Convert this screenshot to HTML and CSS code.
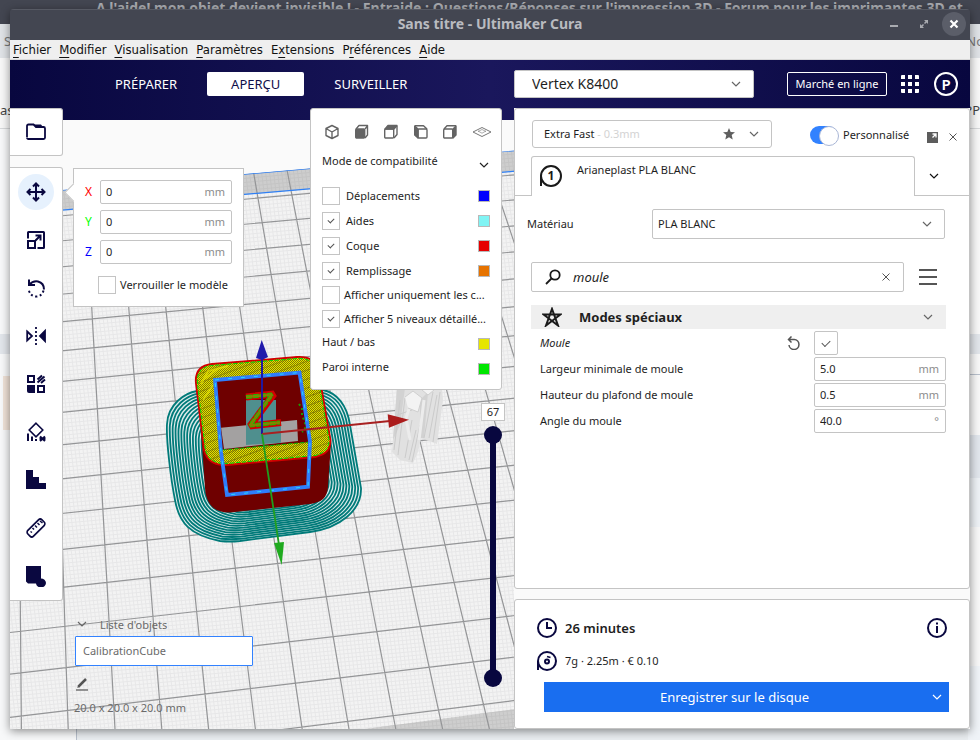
FILE: index.html
```html
<!DOCTYPE html>
<html lang="fr">
<head>
<meta charset="utf-8">
<title>Sans titre - Ultimaker Cura</title>
<link rel="stylesheet" href="styles.css">
</head>
<body>
<svg class="defs" aria-hidden="true">
  <symbol id="chevron" viewBox="0 0 10 6"><path d="M1 1l4 4 4-4" fill="none" stroke="currentColor" stroke-width="1.2"/></symbol>
  <symbol id="cross" viewBox="0 0 8 8"><path d="M.5.5l7 7M7.500.5l-7 7" fill="none" stroke="currentColor" stroke-width="1"/></symbol>
</svg>

<div class="backdrop" aria-hidden="true">
  <div class="backdrop-title">A l'aide! mon objet devient invisible ! - Entraide : Questions/Réponses sur l'impression 3D - Forum pour les imprimantes 3D et</div>
  <div class="backdrop-tabs"><span>S</span><span>No</span></div>
  <div class="backdrop-bar"><span>as</span><span>PP</span></div>
  <div class="backdrop-page">
    <div class="page-left"><div class="stripe"></div><div class="thumb"></div><div class="stripe low"></div></div>
    <div class="page-right"></div>
  </div>
</div>

<div class="window">
  <header class="titlebar">
    <h1>Sans titre - Ultimaker Cura</h1>
    <div class="window-buttons">
      <button aria-label="Réduire"><svg width="10" height="10"><path d="M1 7h8" stroke="#a9abb0" stroke-width="2"/></svg></button>
      <button aria-label="Agrandir"><svg width="10" height="10"><path d="M5 1h4v4zM1 5v4h4z" fill="#a9abb0"/><path d="M2 8l2.500-2.500M8 2L5.500 4.500" stroke="#a9abb0" stroke-width="1.500"/></svg></button>
      <button class="close" aria-label="Fermer"><svg width="10" height="10"><path d="M1.500 1.500l7 7M8.500 1.500l-7 7" stroke="#fff" stroke-width="2.200"/></svg></button>
    </div>
  </header>

  <nav class="menubar">
    <a href="#"><u>F</u>ichier</a><a href="#"><u>M</u>odifier</a><a href="#"><u>V</u>isualisation</a><a href="#"><u>P</u>aramètres</a><a href="#">E<u>x</u>tensions</a><a href="#">P<u>r</u>éférences</a><a href="#"><u>A</u>ide</a>
  </nav>

  <div class="header">
    <nav class="stages">
      <button>PRÉPARER</button><button class="active">APERÇU</button><button>SURVEILLER</button>
    </nav>
    <div class="header-right">
      <div class="select machine">
        <select aria-label="Imprimante"><option>Vertex K8400</option></select>
        <svg class="chev"><use href="#chevron"/></svg>
      </div>
      <div class="account">
        <button class="market">Marché en ligne</button>
        <button class="icon-btn" aria-label="Applications"><svg width="18" height="18" fill="#fff"><path d="M0 1a1 1 0 0 1 1-1h3v4H0zM7 0h4v4H7zM14 0h3a1 1 0 0 1 1 1v3h-4zM0 7h4v4H0zM7 7h4v4H7zM14 7h4v4h-4zM0 14h4v4H1a1 1 0 0 1-1-1zM7 14h4v4H7zM14 14h4v3a1 1 0 0 1-1 1h-3z"/></svg></button>
        <button class="avatar">P</button>
      </div>
    </div>
  </div>

  <main class="stage">
    <svg class="scene" viewBox="10 120 960 609" preserveAspectRatio="xMinYMin slice" role="img" aria-label="Plateau d'impression">
      <defs>
        <pattern id="mesh" width="4" height="4" patternUnits="userSpaceOnUse" patternTransform="matrix(.99 -.09 .12 .99 0 0)"><path d="M0 .5h4M.5 0v4" stroke="#e7e7e8" stroke-width="1"/></pattern>
        <pattern id="meshDark" width="4" height="4" patternUnits="userSpaceOnUse" patternTransform="matrix(.99 -.09 .12 .99 0 0)"><path d="M0 .5h4M.5 0v4" stroke="#c4c4c4" stroke-width="1"/></pattern>
        <pattern id="hatch" width="2" height="2" patternUnits="userSpaceOnUse"><path d="M0 0h1v1H0zM1 1h1v1H1z" fill="#807c00"/></pattern>
        <pattern id="diag" width="13" height="11" patternUnits="userSpaceOnUse" patternTransform="rotate(20)"><path d="M0 11L13 0" stroke="#7d7500" stroke-width="1"/></pattern>
        <clipPath id="plate"><path d="M10 194.600L515 150.500V729H10z"/></clipPath>
        <path id="brim" d="M197 391C185 393 168 404 167 424C166 440 171 480 175 500C179 523 190 535 220 541Q230 542 240 541L310 532C340 528 362 510 361 488L350 425C347 405 337 393 323 390L297 372L212 380Z" vector-effect="non-scaling-stroke"/>
      </defs>
      <rect x="10" y="120" width="960" height="609" fill="#fafafa"/>
      <g clip-path="url(#plate)">
        <path d="M10 194.600L515 150.500V729H10z" fill="#f3f3f3"/>
        <path d="M10 194.600L515 150.500V729H10z" fill="url(#mesh)"/>
        <path d="M10 194.600L515 150.500V171.200L10 214.600z" fill="#cdcdcd"/>
        <path d="M10 194.600L515 150.500V171.200L10 214.600z" fill="url(#meshDark)"/>
        <path d="M365 729L515 709V729z" fill="#cecece"/>
        <path d="M365 729L515 709V729z" fill="url(#meshDark)"/>
        <path fill="none" stroke="#949597" stroke-width="1.200" d="M10 220.500L515 174.800M10 245.500L515 199.800M10 271.500L515 225.800M10 299L515 251.800M10 326.700L515 278.800M10 355.900L515 306.700M10 386.600L515 335.700M10 417.700L515 366.400M10 450.200L515 398.200M10 484.300L515 430.600M10 519L515 465.100M10 555.100L515 500.100M10 593.200L515 537.100M10 632.500L515 575.500M10 674.200L515 615.500M10 717.300L515 657M10 763.600L515 700.400
        M16.100 120L21.400 729M48.700 120L68.200 729M81.400 120L115 729M114 120L161.800 729M146.700 120L208.600 729M179.300 120L255.400 729M212 120L302.200 729M244.600 120L349 729M277.300 120L395.800 729M309.900 120L442.600 729M342.600 120L489.400 729M375.200 120L536.200 729M407.900 120L583 729M440.500 120L629.800 729M473.200 120L676.600 729M505.800 120L723.400 729"/>
        <path d="M10 194.600L515 150.500M10 214.600L515 171.200" stroke="#2f80f5" stroke-width="1.300"/>
      </g>

      <g class="ghost">
        <path d="M397 388L392 452L400 460L413 463L418 452L421 438L437 444L443 400L442 388Z" fill="#e1e1e1"/>
        <path d="M397 388H405L400 425L393 440ZM420 400L428 392L424 438L420 438Z" fill="#d2d2d2"/>
        <path d="M400 400L394 450M405 398L398 455M412 420L405 458M420 425L412 462M433 392L424 438M440 392L433 442M397 415L412 410M416 430L409 460M437 395L429 438" stroke="#cbcbcb"/>
        <path d="M412 400L406 418L410 440M424 400L419 440" stroke="#ececec" stroke-width="3" fill="none"/>
        <path d="M405 397L413 391L422 398L418 412L408 408M422 390L428 395L434 390" fill="#f3f3f3" stroke="#cfcfcf"/>
      </g>

      <use href="#brim" fill="#dcebeb"/>
      <g fill="none" stroke="#007a79" stroke-width="1.800">
        <use href="#brim"/>
        <use href="#brim" transform="translate(7.900 14) scale(.97)"/>
        <use href="#brim" transform="translate(15.800 28) scale(.94)"/>
        <use href="#brim" transform="translate(23.700 42) scale(.91)"/>
        <use href="#brim" transform="translate(31.600 56) scale(.88)"/>
        <use href="#brim" transform="translate(39.500 70) scale(.85)"/>
        <use href="#brim" transform="translate(47.400 84) scale(.82)"/>
        <use href="#brim" transform="translate(55.300 98) scale(.79)"/>
        <use href="#brim" transform="translate(63.200 112) scale(.76)"/>
        <use href="#brim" transform="translate(71.100 126) scale(.73)"/>
        <use href="#brim" transform="translate(79 140) scale(.7)"/>
        <use href="#brim" transform="translate(86.900 154) scale(.67)"/>
        <use href="#brim" transform="translate(94.800 168) scale(.64)"/>
        <use href="#brim" transform="translate(102.700 182) scale(.61)"/>
        <use href="#brim" transform="translate(110.600 196) scale(.58)"/>
      </g>
      <path d="M196 380L200 417L205 488C206 504 214 513 230 512.500L310 504C322 502 327 498 328 487L331 443L322 390L310 365Z" fill="#6f0000"/>
      <path d="M196 384Q194 366 212 364L297 357Q314 356 318 368L330.500 440Q331 454 315 457L227 465Q208 466 204 450Z" fill="#e6e200"/>
      <path d="M196 384Q194 366 212 364L297 357Q314 356 318 368L330.500 440Q331 454 315 457L227 465Q208 466 204 450Z" fill="url(#hatch)"/>
      <path d="M196 384Q194 366 212 364L297 357Q314 356 318 368L330.500 440Q331 454 315 457L227 465Q208 466 204 450Z" fill="url(#diag)" stroke="#d00000" stroke-width="1.800"/>
      <path d="M197.500 384Q196 367 212 365.500L297 358.500Q313 358 316.500 369L329 440Q329 452 315 455.500L227 463.500Q209 464 205.500 450Z" fill="none" stroke="#00d800" stroke-dasharray="4 2"/>
      <path d="M201 384L208 371L228 366M203 400L213 385M203 380L220 367" stroke="#f0ec00" stroke-width="2" fill="none" opacity=".6"/>
      <path d="M215 380L300 372L310 442L222 450Z" fill="#6f0000" stroke="#00b400" stroke-dasharray="4 2"/>
      <path d="M221 427.700L297 420L298 441L224 449Z" fill="#a3a1a1"/>
      <path d="M246 400H276V425H281V442.700L246 445Z" fill="#4f8f8e"/>
      <path d="M299 404l3 4v8l3 6v8l-3 2" stroke="#1d9a00" stroke-width="2" stroke-dasharray="2 3" fill="none"/>
      <g fill="none" stroke-linejoin="bevel">
        <path d="M246 397L274 394L250 426L281 422.500" stroke="#d50000" stroke-width="7"/>
        <path d="M246 397L272 394.500L250 425.500L280 422.500" stroke="#00c800" stroke-width="4" stroke-dasharray="6 1"/>
        <path d="M246 397L272 394.500L250 425.500L280 422.500" stroke="#7f8400" stroke-width="2.500"/>
      </g>
      <path d="M215 380L299.500 372.500L310 441.700L308 486.700L227 495L221 452Z" fill="none" stroke="#2f7dfb" stroke-width="3.800"/>
      <path d="M215 380L299.500 372.500L310 441.700L308 486.700L227 495L221 452Z" fill="none" stroke="#26d9ff" stroke-dasharray="4 9"/>
      <path d="M262 434V356" stroke="#2018a0" stroke-width="2"/><path d="M256 358L261.700 340L268 357L262 360Z" fill="#211bab"/>
      <path d="M262 434L390 421" stroke="#a82020" stroke-width="1.800"/><path d="M387.700 414.300L409 419.700L389 427.700Z" fill="#ab1c1c"/>
      <path d="M262 434L279 545" stroke="#1f9f1f" stroke-width="1.800"/><path d="M274 543L284 542L281.700 565Z" fill="#1faa1f"/>
    </svg>

    <div class="overlay">
      <div class="left-rail">
        <div class="rail-box"><button class="tool" aria-label="Ouvrir un fichier"><svg width="20" height="20"><path d="M1 15V4Q1 2.500 2.500 2.500H7.500L10 5H17.500Q19 5 19 6.500V15.500Q19 17 17.500 17H2.500Q1 17 1 15.500" fill="none" stroke="#0a0840" stroke-width="1.800"/><path d="M7.500 2.500H15L17 5H10z" fill="#0a0840"/></svg></button></div>
        <div class="rail-box tools">
          <button class="tool active" aria-label="Déplacer"><svg width="20" height="20" fill="none" stroke="#0a0840" stroke-width="2"><path d="M10 2v16M2 10h16M7 4.500L10 1.500l3 3M7 15.500l3 3 3-3M4.500 7L1.500 10l3 3M15.500 7l3 3-3 3"/></svg></button>
          <button class="tool" aria-label="Mettre à l'échelle"><svg width="20" height="20" fill="none" stroke="#0a0840" stroke-width="2"><path d="M2 8.500V2.500Q2 2 2.500 2h15q.5 0 .5.5v15q0 .5-.5.5h-6M2 11h7v7H2zM9.500 10.500L14.500 5.500M9.500 5.500h5v5"/></svg></button>
          <button class="tool" aria-label="Pivoter"><svg width="20" height="20" fill="none" stroke="#0a0840" stroke-width="2"><path d="M3 1.500V7h6M3 7Q7 2.500 12 3.500 18 5 18 11.500"/><path d="M17.500 12.500Q16 18 10.500 18.500 4 18.500 2.500 11" stroke-dasharray="2 2.500"/></svg></button>
          <button class="tool" aria-label="Miroir"><svg width="20" height="20" fill="none" stroke="#0a0840" stroke-width="1.800"><path d="M1.200 5.500L6 10l-4.800 4.500z"/><path d="M10 1v18" stroke-dasharray="2 2"/><path d="M19 5l-5 5 5 5z" fill="#0a0840"/></svg></button>
          <button class="tool" aria-label="Réglages par modèle"><svg width="20" height="20" fill="none" stroke="#0a0840" stroke-width="2"><path d="M2 2h6v6H2zM12 12h6v6h-6z"/><path d="M1 11h8v8H3q-2 0-2-2z" fill="#0a0840" stroke="none"/><path d="M11.500 5.500L16 1.500M11.500 8.500L18.500 2.500M15 9l4-3.500"/></svg></button>
          <button class="tool" aria-label="Bloqueur de supports"><svg width="20" height="20" fill="none" stroke="#0a0840" stroke-width="2"><path d="M10 1.200L16.800 8 10 14.800 3.200 8z" stroke-width="1.600"/><path d="M2 11.500V19M6 14.500V19M10 17v2M14 14.500l5 4.500M19 14.500L14 19M13.500 16.700h6"/></svg></button>
          <button class="tool" aria-label="Support personnalisé"><svg width="20" height="20"><path d="M0 0h7v7h6v6h7v6H0z" fill="#0a0840"/></svg></button>
          <button class="tool" aria-label="Mesurer"><svg width="20" height="20" fill="none" stroke="#0a0840" stroke-width="1.700"><rect x="-10" y="-4" width="20" height="8" rx="2.500" transform="translate(10 10) rotate(-45)"/><path d="M9 7.500l2 2M11.500 5l2 2M14 3l2.500 2M6.500 10l1.500 1.500M4.500 13.500l1.500 1" stroke-width="1.500"/></svg></button>
          <button class="tool" aria-label="Marquage"><svg width="20" height="22"><path d="M0 1h15v12.500a5 4.500 0 1 1-5 5H2L0 16.500z" fill="#0a0840"/></svg></button>
        </div>
      </div>

      <div class="center-left">
        <form class="popover">
          <label class="axis"><span class="x">X</span><span class="field"><input value="0"><i>mm</i></span></label>
          <label class="axis"><span class="y">Y</span><span class="field"><input value="0"><i>mm</i></span></label>
          <label class="axis"><span class="z">Z</span><span class="field"><input value="0"><i>mm</i></span></label>
          <label class="lock"><input type="checkbox" class="check">Verrouiller le modèle</label>
        </form>
        <section class="objects">
          <button class="objects-head"><svg class="chev"><use href="#chevron"/></svg>Liste d'objets</button>
          <button class="object">CalibrationCube</button>
          <button class="edit" aria-label="Renommer"><svg width="14" height="14"><path d="M3.500 9.500L11 2" stroke="#555" stroke-width="2.500"/><path d="M3 8l-.7 3L5 10z" fill="#555"/><path d="M1 13h12" stroke="#555" stroke-width="1.200"/></svg></button>
          <p>20.0 x 20.0 x 20.0 mm</p>
        </section>
      </div>

      <div class="center-right">
        <section class="preview">
          <div class="views">
            <button aria-label="Vue 3D"><svg width="16" height="16" class="cube"><path d="M8 1.500l6 3v7l-6 3-6-3v-7zM2 4.500l6 3.500 6-3.500M8 8v6.500"/></svg></button>
            <button aria-label="Vue de face"><svg width="16" height="16" class="cube"><path d="M2 5l3-3.500h8.500V11L11 14M11 5l2.500-3"/><rect x="1.700" y="5" width="9" height="9" rx="1" fill="#646464"/></svg></button>
            <button aria-label="Vue de dessus"><svg width="16" height="16" class="cube"><path d="M2 5l3-3.500h9L11 5z" fill="#646464"/><path d="M14 2v8.500L11 14"/><rect x="1.700" y="5" width="9" height="9" rx="1"/></svg></button>
            <button aria-label="Vue gauche"><svg width="16" height="16" class="cube"><path d="M1.700 2L5 5v9L1.700 11z" fill="#646464"/><path d="M2 1.700h8.500L14 5"/><rect x="5" y="5" width="9" height="9" rx="1"/></svg></button>
            <button aria-label="Vue droite"><svg width="16" height="16" class="cube"><path d="M11 5l3-3v9l-3 3z" fill="#646464"/><path d="M2 5l3-3.300h9"/><rect x="1.700" y="5" width="9" height="9" rx="1"/></svg></button>
            <button aria-label="Rayons X"><svg width="20" height="16" class="thin"><path d="M1 8l9-4.500L19 8l-9 4.500z"/><path d="M6 7l4 2.200M10 5.500l4 2M14 7l-4 2.200M10 5.500L6 7.500" opacity=".6"/></svg></button>
          </div>
          <button class="mode">Mode de compatibilité<svg class="chev"><use href="#chevron"/></svg></button>
          <ul class="layers">
            <li><label><input type="checkbox" class="check">Déplacements</label><span class="swatch blue"></span></li>
            <li><label><input type="checkbox" class="check" checked>Aides</label><span class="swatch cyan"></span></li>
            <li><label><input type="checkbox" class="check" checked>Coque</label><span class="swatch red"></span></li>
            <li><label><input type="checkbox" class="check" checked>Remplissage</label><span class="swatch orange"></span></li>
            <li class="plain"><label><input type="checkbox" class="check">Afficher uniquement les c...</label></li>
            <li class="plain"><label><input type="checkbox" class="check" checked>Afficher 5 niveaux détaillé...</label></li>
            <li class="legend">Haut / bas<span class="swatch yellow"></span></li>
            <li class="legend">Paroi interne<span class="swatch green"></span></li>
          </ul>
        </section>
        <div class="layer-slider">
          <output>67</output>
          <div class="ranges">
            <input type="range" min="0" max="67" value="67" aria-label="Couche supérieure">
            <input type="range" min="0" max="67" value="0" aria-label="Couche inférieure">
          </div>
        </div>
      </div>

      <aside class="right-col">
        <section class="settings">
          <div class="quality-row">
            <button class="quality"><span>Extra Fast <em>- 0.3mm</em></span><svg width="12" height="12"><path d="M6 0l1.700 4 4.300.3-3.300 2.800 1 4.300L6 9.200l-3.700 2.200 1-4.300L0 4.300 4.300 4z" fill="#5f5f5f"/></svg><svg class="chev"><use href="#chevron"/></svg></button>
            <label class="toggle"><input type="checkbox" checked>Personnalisé</label>
            <div class="panel-icons">
              <button aria-label="Détacher"><svg width="11" height="11"><path d="M0 0h11v11H0z" fill="#5c5c5c"/><path d="M5.500 2H9v3.500M9 2L5.500 5.500" stroke="#fff" stroke-width="1.300" fill="none"/></svg></button>
              <button aria-label="Fermer"><svg width="8" height="8"><use href="#cross"/></svg></button>
            </div>
          </div>
          <div class="extruder-row">
            <button class="extruder"><svg width="24" height="24"><path d="M2 22V12" stroke="#1a1a1a" stroke-width="2"/><circle cx="12" cy="12" r="10" fill="none" stroke="#1a1a1a" stroke-width="2"/><text x="12" y="16" text-anchor="middle">1</text></svg><span>Arianeplast PLA BLANC</span></button>
            <button class="extruder-more" aria-label="Configuration"><svg class="chev"><use href="#chevron"/></svg></button>
          </div>
          <div class="material-row">
            <label for="material">Matériau</label>
            <div class="select"><select id="material"><option>PLA BLANC</option></select><svg class="chev"><use href="#chevron"/></svg></div>
          </div>
          <div class="search-row">
            <label class="search"><svg width="16" height="16"><circle cx="10" cy="6" r="4.700" fill="none" stroke="#1a1a1a" stroke-width="1.800"/><path d="M6.500 9.500L1 15" stroke="#1a1a1a" stroke-width="1.800"/></svg><input value="moule" aria-label="Rechercher"><button type="button" aria-label="Effacer"><svg width="8" height="8"><use href="#cross"/></svg></button></label>
            <button class="burger" aria-label="Menu"><svg width="18" height="17"><path d="M0 1h18M0 8h18M0 15h18" stroke="#555" stroke-width="2"/></svg></button>
          </div>
          <div class="params">
            <button class="category"><svg width="20" height="20" viewBox="0 0 20 20"><path d="M4 18.500L10 2l6 16.500L1.500 7.500h17z" fill="none" stroke="#1a1a1a" stroke-width="2"/></svg>Modes spéciaux<svg class="chev"><use href="#chevron"/></svg></button>
            <div class="param changed"><label for="p1">Moule</label><button aria-label="Réinitialiser"><svg width="14" height="14" fill="none" stroke="#555" stroke-width="1.500"><path d="M2 3.500H7.200A5 5 0 1 1 2 9M4.500.5L1.500 3.500l3 3"/></svg></button><div class="value"><input id="p1" type="checkbox" class="check big" checked></div></div>
            <div class="param"><label for="p2">Largeur minimale de moule</label><span class="field value"><input id="p2" value="5.0"><i>mm</i></span></div>
            <div class="param"><label for="p3">Hauteur du plafond de moule</label><span class="field value"><input id="p3" value="0.5"><i>mm</i></span></div>
            <div class="param"><label for="p4">Angle du moule</label><span class="field value"><input id="p4" value="40.0"><i>°</i></span></div>
          </div>
        </section>

        <section class="action">
          <div class="line time"><svg width="20" height="20" fill="none" stroke="#0a0840" stroke-width="2"><circle cx="10" cy="10" r="9"/><path d="M10 4v6h5"/></svg><strong>26 minutes</strong>
            <button aria-label="Informations"><svg width="20" height="20" fill="none" stroke="#0a0840" stroke-width="2"><circle cx="10" cy="10" r="9"/><path d="M10 8v7M10 4.500v2"/></svg></button></div>
          <div class="line"><svg width="20" height="20" fill="none" stroke="#0a0840" stroke-width="2"><circle cx="10" cy="10" r="9"/><path d="M1 10v9"/><circle cx="10" cy="10.500" r="2"/><path d="M10 5.500L13.500 6.500" stroke-width="1.800"/></svg><span>7g · 2.25m · € 0.10</span></div>
          <div class="save"><button>Enregistrer sur le disque</button><button class="more" aria-label="Autres destinations"><svg class="chev"><use href="#chevron"/></svg></button></div>
        </section>
      </aside>
    </div>
  </main>
</div>
</body>
</html>
```
FILE: styles.css
```css
* { box-sizing: border-box; }
body {
  margin: 0;
  height: 100vh;
  padding: 9px 10px 11px;
  overflow: hidden;
  font: 11px/16px "Noto Sans", sans-serif;
  color: #1e1e1e;
}
button, input, select { font: inherit; color: inherit; margin: 0; padding: 0; border: 0; background: none; outline: 0; }
svg { display: block; flex: none; }
em, i { font-style: normal; }
.defs { position: absolute; width: 0; height: 0; }
.chev { width: 10px; height: 6px; color: #666; }

/* browser window lying behind */
.backdrop { position: absolute; inset: 0; z-index: -1; display: flex; flex-direction: column; overflow: hidden; background: #f7f8f9; }
.backdrop-title { flex: none; height: 24px; padding-left: 96px; background: #434651; color: #a9abb0; font: bold 14px/16px "Noto Sans", sans-serif; white-space: nowrap; }
.backdrop-tabs, .backdrop-bar { flex: none; display: flex; justify-content: space-between; height: 34px; line-height: 34px; padding: 0 1px 0 4px; background: #dfe2e6; color: #777; font-size: 13px; }
.backdrop-tabs span:last-child { margin-right: -5px; }
.backdrop-bar { height: 71px; line-height: 104px; padding-left: 0; background: #f7f7f7; border-bottom: 1px solid #d6d8da; color: #444; }
.backdrop-bar span:last-child { margin-right: -1px; }
.backdrop-page { flex: 1; display: flex; min-height: 0; }
.page-left { flex: 1; }
.page-right { width: 12px; background: linear-gradient(#f7f7f7 205px, #e1e5ea 205px 225px, #f7f7f7 225px 245px, #b8c0cc 245px 246px, #f7f7f7 246px 306px, #e1e6ec 306px 349px, #edf1f5 349px 398px, #f7f7f7 398px 537px, #eff3f7 537px); }
.stripe { height: 20px; margin-top: 205px; background: #e1e5ea; }
.thumb { width: 30px; height: 54px; margin: 22px 0 0 3px; background: #f0e2d7; }
.stripe.low { margin: 236px 0 0 76px; height: 80px; border-left: 1px solid #b8c0cc; background: #e9edf0; }

.window { display: flex; flex-direction: column; height: 100%; border-radius: 4px 4px 0 0; overflow: hidden; box-shadow: 0 2px 10px rgba(0, 0, 0, .45); }
.titlebar { display: grid; grid-template-columns: 1fr; height: 31px; align-items: center; padding-bottom: 2px; background: #434651; border-top: 1px solid #575a64; }
.titlebar h1 { grid-area: 1/1; margin: 0; text-align: center; font-size: 14px; line-height: 18px; color: #b9bbc0; }
.window-buttons { grid-area: 1/1; justify-self: end; display: flex; gap: 6px; padding-right: 4px; }
.window-buttons button { display: grid; place-items: center; width: 24px; height: 24px; border-radius: 50%; }
.window-buttons .close { background: #5b5e69; }

.menubar { display: flex; gap: 8px; height: 20px; padding-left: 3px; background: #efefef; border-bottom: 1px solid #d8d8d8; font: 13px/19px "DejaVu Sans Condensed", "DejaVu Sans", sans-serif; }
.menubar a { color: #111; text-decoration: none; }
.menubar u { text-underline-offset: 3px; }

.header { display: flex; flex: none; justify-content: space-between; height: 60px; padding-top: 10px; background: linear-gradient(90deg, #08073f, #1a175c 50%, #08073f); }
.stages { display: flex; gap: 6px; padding: 2px 0 0 81px; }
.stages button { height: 24px; padding: 0 24px; border-radius: 2px; font-size: 13px; color: #fff; }
.stages .active { background: #fff; color: #0f0e4a; }
.header-right { display: flex; justify-content: space-between; width: 456px; }
.account { display: flex; align-items: center; height: 28px; margin-right: 12px; }
.market { height: 24px; width: 100px; border: 1px solid #fff; border-radius: 2px; color: #fff; }
.icon-btn { margin: 0 15px 0 14px; }
.avatar { width: 24px; height: 24px; border: 2px solid #fff; border-radius: 50%; color: #fff; font-size: 15px; line-height: 18px; font-weight: 600; }

.select { display: grid; align-items: center; border: 1px solid #c4c4c4; border-radius: 2px; background: #fff; }
.select select { grid-area: 1/1; appearance: none; width: 100%; height: 28px; padding: 0 5px; }
.select .chev { grid-area: 1/1; justify-self: end; margin-right: 12px; pointer-events: none; }
.machine { width: 240px; height: 28px; }
.machine select { height: 26px; padding: 0 17px; font-size: 14px; }

.stage { position: relative; flex: 1; min-height: 0; }
.scene { position: absolute; inset: 0; width: 100%; height: 100%; }
.overlay { position: relative; display: flex; height: calc(100% + 12px); margin-top: -12px; }

.left-rail { display: flex; flex-direction: column; align-items: flex-start; gap: 11px; }
.rail-box { width: 53px; padding: 5px 8px; background: #fff; border: 1px solid #c4c4c4; border-left: 0; border-radius: 0 3px 3px 0; }
.tools { display: flex; flex-direction: column; gap: 12px; padding: 6px 8px; }
.tool { display: grid; place-items: center; width: 36px; height: 36px; border-radius: 50%; }
.tool.active { background: #e6f1fd; }

.center-left { display: flex; flex: 1; flex-direction: column; justify-content: space-between; align-items: flex-start; padding: 60px 0 13px 10px; }
.popover { position: relative; display: flex; flex-direction: column; gap: 6px; width: 171px; height: 139px; padding: 11px; background: #fff; border: 1px solid #c4c4c4; }
.popover::before { content: ""; position: absolute; left: -7px; top: 17px; width: 12px; height: 12px; background: #fff; border: 1px solid #c4c4c4; border-width: 0 0 1px 1px; transform: rotate(45deg); }
.axis { display: flex; align-items: center; justify-content: space-between; font-size: 12px; }
.axis .x { color: #f00; } .axis .y { color: #0f0; } .axis .z { color: #00f; }
.field { display: flex; align-items: center; width: 132px; height: 24px; padding: 0 6px 0 5px; border: 1px solid #c4c4c4; border-radius: 2px; background: #fff; font-size: 11px; }
.field input { flex: 1; min-width: 0; }
.field i { color: #8c8c8c; }
.lock { display: flex; align-items: center; gap: 4px; margin: 6px 0 0 13px; white-space: nowrap; }
.check { appearance: none; flex: none; display: grid; place-items: center; width: 18px; height: 18px; border: 1px solid #c4c4c4; background: #fff; }
.check:checked::before { content: ""; width: 5px; height: 3px; margin-top: -2px; border: solid #555; border-width: 0 0 1px 1px; transform: rotate(-45deg); }
.check.big { width: 24px; height: 24px; border-radius: 2px; }
.check.big:checked::before { width: 7px; height: 4px; }

.objects { display: flex; flex-direction: column; align-items: flex-start; color: #6a6a6a; }
.objects-head { display: flex; gap: 13px; margin-left: 4px; height: 19px; line-height: 16px; }
.objects-head .chev { margin-top: 4px; }
.object { width: 178px; height: 30px; margin-left: 2px; padding: 0 7px; text-align: left; background: #fff; border: 1px solid #3282ff; border-radius: 1px; }
.edit { margin: 11px 0 9px 2px; }
.objects p { margin: 0 0 0 1px; }

.center-right { display: flex; flex-direction: column; align-items: flex-end; width: 204px; padding-right: 12px; }
.preview { width: 192px; height: 282px; padding: 15px 11px 0; background: #fff; border: 1px solid #c4c4c4; border-radius: 3px; }
.views { display: flex; justify-content: space-between; margin: 0 -2px 0 2px; }
.cube { fill: none; stroke: #646464; stroke-width: 1.4; stroke-linejoin: round; }
.thin { fill: none; stroke: #777; stroke-width: 1; }
.mode { display: flex; align-items: center; justify-content: space-between; width: 100%; margin: 13px 0 14px; padding-right: 1px; }
.mode .chev { margin-top: 8px; color: #222; }
.layers { margin: 0; padding: 0; list-style: none; }
.layers li { display: flex; align-items: center; justify-content: space-between; height: 25px; }
.layers label { display: flex; align-items: center; gap: 6px; white-space: nowrap; }
.layers .plain { height: 24px; }
.layers .plain label { gap: 4px; }
.layers .legend { line-height: 12px; align-items: flex-start; padding-top: 5px; }
.legend .swatch { margin-top: 2px; }
.swatch { width: 12px; height: 12px; border: 1px solid #b9b9b9; }
.blue { background: #00f; } .cyan { background: #80f4f4; } .red { background: #e60000; }
.orange { background: #e67300; } .yellow { background: #e6e600; } .green { background: #00e600; }

.layer-slider { display: flex; flex-direction: column; align-items: center; gap: 5px; width: 24px; margin: 13px -3px 0 0; }
.layer-slider output { width: 24px; height: 18px; background: #fff; border: 1px solid #c4c4c4; text-align: center; line-height: 16px; }
.ranges { display: grid; justify-items: center; height: 261px; width: 18px; background: linear-gradient(#08073f, #08073f) center / 6px 240px no-repeat; }
.ranges input { grid-area: 1/1; appearance: none; writing-mode: vertical-lr; direction: rtl; width: 18px; height: 261px; pointer-events: none; }
.ranges input::-webkit-slider-thumb { appearance: none; width: 18px; height: 18px; border-radius: 50%; background: #08073f; pointer-events: auto; }

.right-col { display: flex; flex-direction: column; gap: 10px; width: 456px; background: #fafafa; }
.settings, .action { background: #fff; border: 1px solid #c4c4c4; border-radius: 3px; }
.settings { flex: 1; padding-top: 11px; }
.quality-row { display: flex; align-items: center; padding: 0 12px 0 17px; }
.quality { display: flex; align-items: center; width: 240px; height: 28px; padding: 0 12px 0 11px; border: 1px solid #c4c4c4; border-radius: 3px; }
.quality span { flex: 1; text-align: left; }
.quality em { color: #d3d3d3; }
.quality .chev { margin-left: 14px; }
.toggle { display: flex; align-items: center; gap: 6px; margin: 2px 0 0 38px; }
.toggle input { appearance: none; width: 27px; height: 18px; border-radius: 9px; background: #3282ff; }
.toggle input::before { content: ""; display: block; width: 18px; height: 18px; margin-left: 9px; border: 1px solid #a9b6d6; border-radius: 50%; background: #fff; }
.panel-icons { display: flex; align-items: center; gap: 11px; margin: 6px 0 0 auto; color: #555; }
.extruder-row { display: flex; height: 40px; margin-top: 8px; }
.extruder-row::before { content: ""; width: 16px; border-bottom: 1px solid #c4c4c4; }
.extruder { display: flex; gap: 14px; width: 384px; padding: 7px 7px 0; align-items: flex-start; border: 1px solid #c4c4c4; border-bottom: 0; border-radius: 3px 3px 0 0; }
.extruder span { margin-top: -2px; }
.extruder text { font: bold 12px "Noto Sans", sans-serif; fill: #1a1a1a; }
.extruder-more { flex: 1; display: grid; place-items: center; padding-right: 16px; border-bottom: 1px solid #c4c4c4; }
.extruder-more .chev { color: #111; }
.material-row { display: flex; align-items: center; justify-content: space-between; padding: 13px 24px 0 12px; }
.material-row .select { width: 293px; height: 30px; }
.search-row { display: flex; align-items: center; gap: 15px; padding: 23px 24px 0 16px; }
.search { display: flex; align-items: center; width: 373px; height: 30px; padding: 0 13px; border: 1px solid #c4c4c4; border-radius: 2px; color: #555; }
.search input { flex: 1; min-width: 0; margin-left: 12px; font-size: 13px; font-style: italic; color: #1e1e1e; }
.params { padding: 13px 23px 0 16px; }
.category { display: flex; align-items: center; width: 100%; height: 24px; margin-bottom: 2px; padding: 0 13px 0 11px; background: #efefef; font-size: 13px; font-weight: bold; }
.category svg:first-child { margin-right: 17px; }
.category .chev { margin-left: auto; }
.param { display: flex; align-items: center; height: 24px; margin-bottom: 2px; padding-left: 9px; }
.param label { flex: 1; }
.changed label { font-style: italic; }
.changed button { margin-right: 13px; }
.value { width: 132px; }

.action { height: 130px; padding: 18px 20px 0 22px; }
.line { display: flex; align-items: center; gap: 8px; height: 20px; margin-bottom: 13px; }
.time strong { flex: 1; font-size: 13px; font-weight: 600; }
.time button { margin-right: 2px; }
.save { display: flex; height: 30px; margin: -2px 0 0 7px; background: #196ef0; color: #fff; font-size: 13px; }
.save button:first-child { flex: 1; }
.save .more { display: grid; place-items: center; width: 24px; }
.save .chev { color: #fff; }
```
